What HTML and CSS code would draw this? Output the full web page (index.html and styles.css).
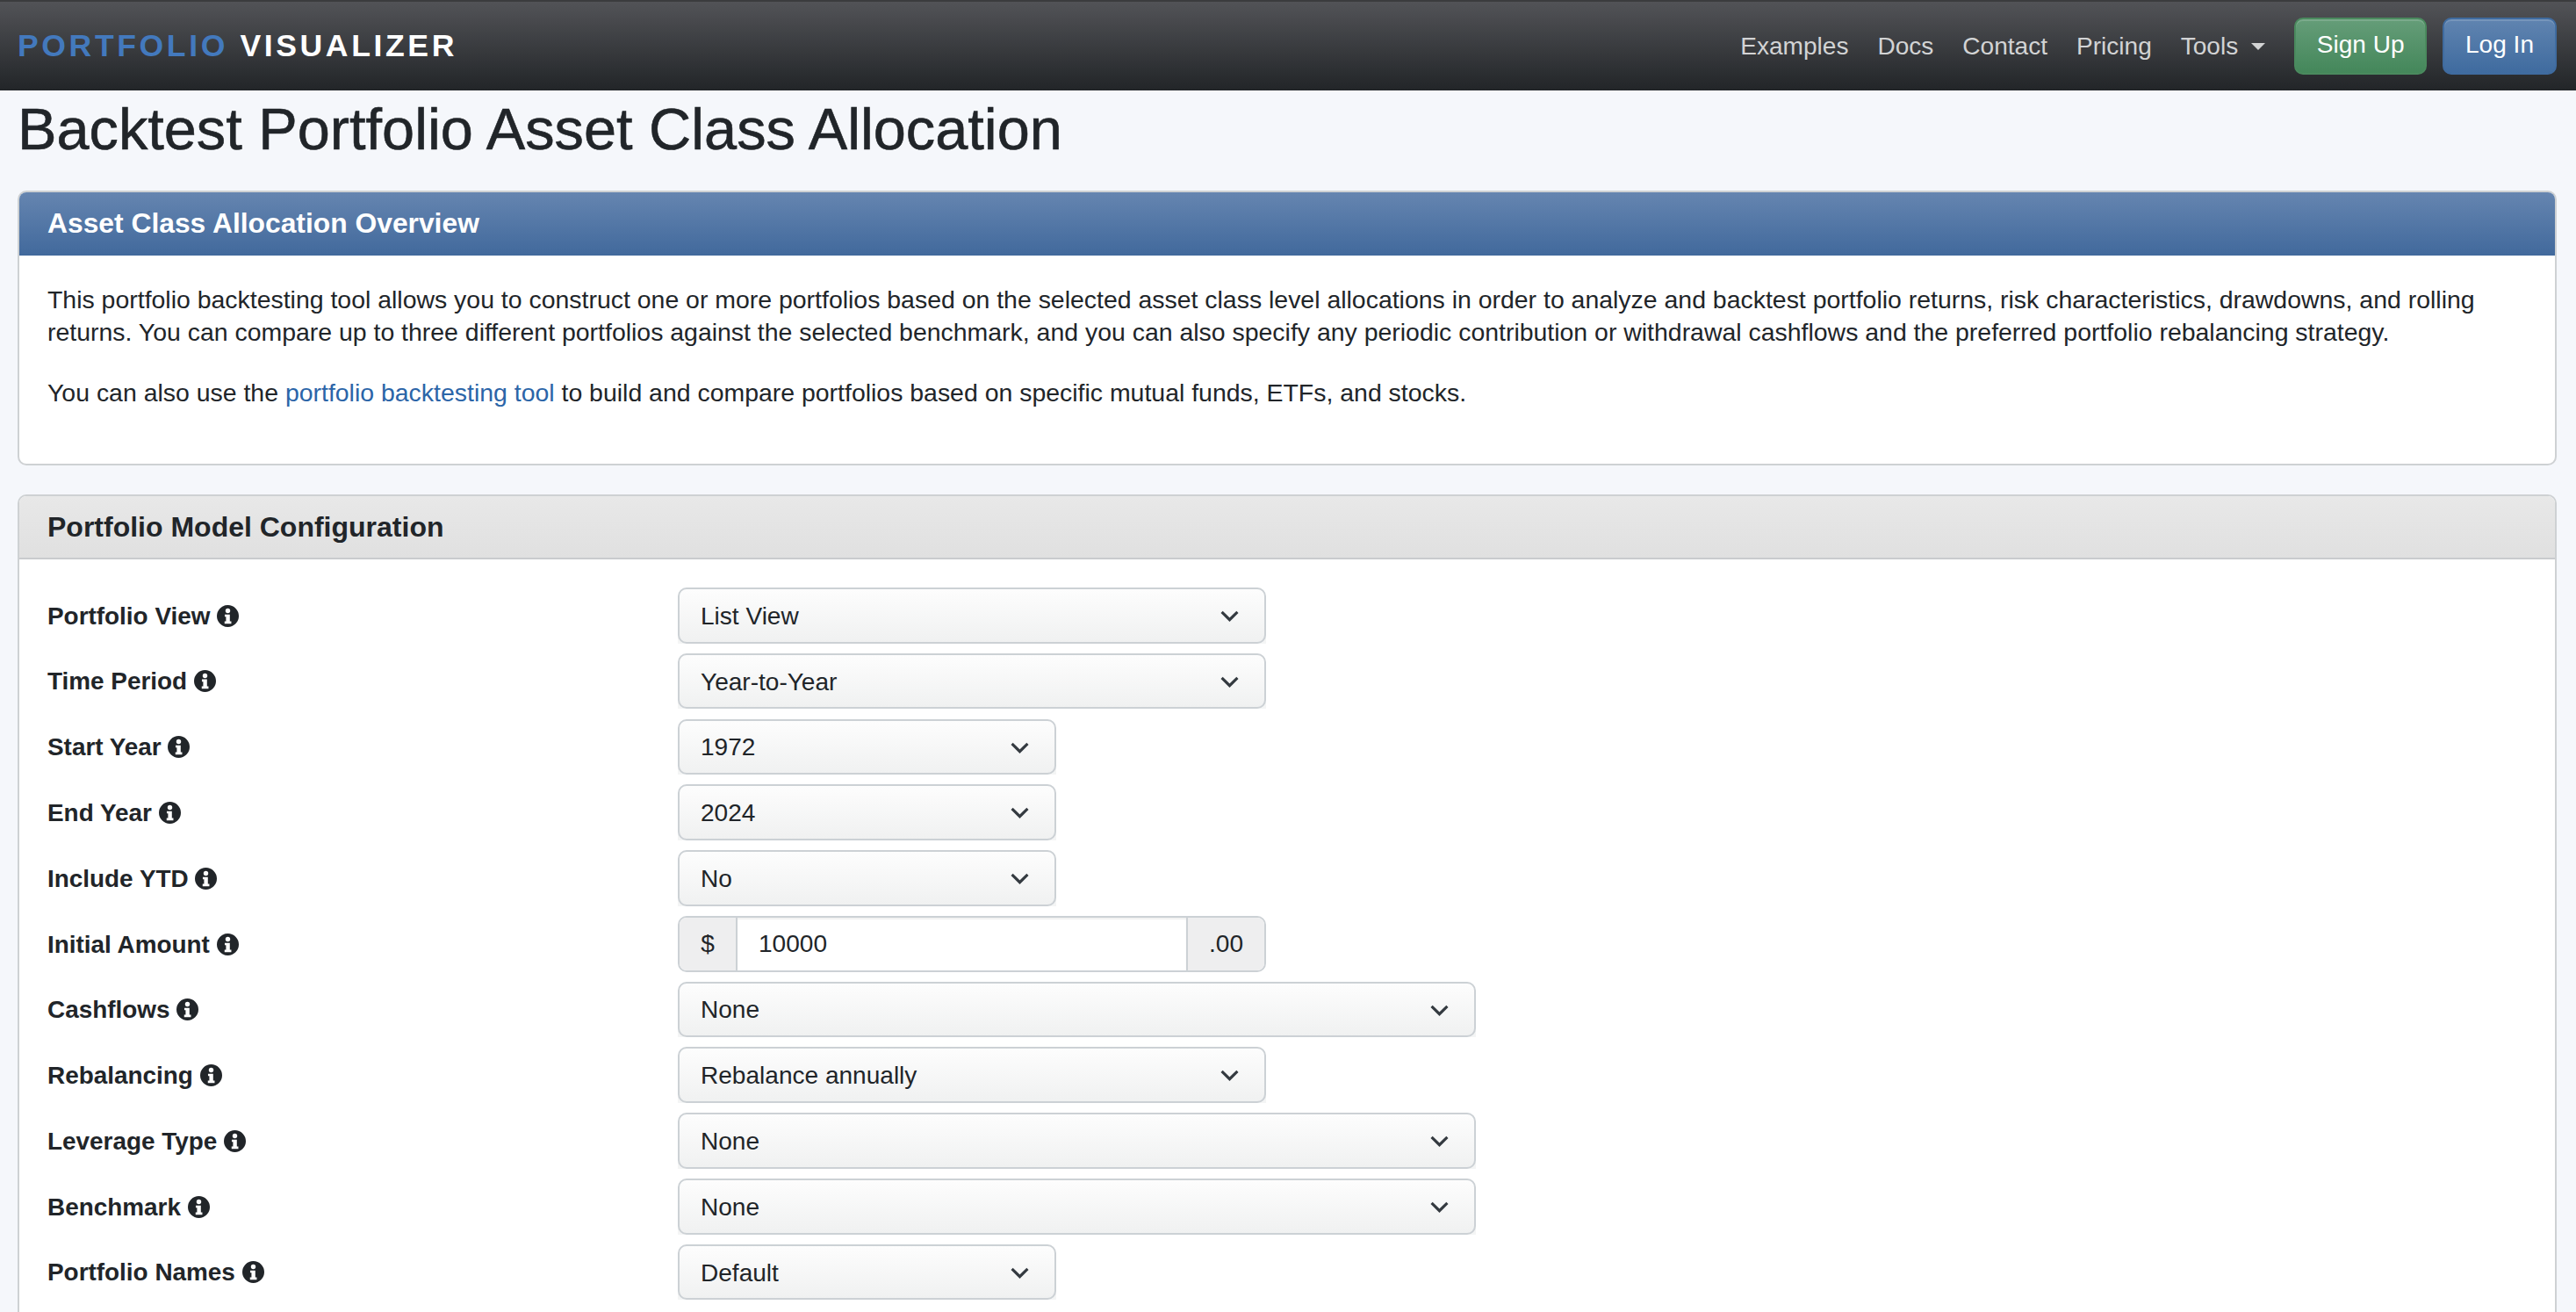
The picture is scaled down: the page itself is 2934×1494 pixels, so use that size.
FILE: index.html
```html
<!DOCTYPE html>
<html>
<head>
<meta charset="UTF-8">
<title>Backtest Portfolio Asset Class Allocation</title>
<link rel="stylesheet" href="styles.css">
</head>
<body>
	<svg class="defs">
		<symbol id="info" viewBox="0 0 24 24">
			<path fill-rule="evenodd" d="M12 0a12 12 0 1 0 0 24a12 12 0 0 0 0-24zM12 3.6a2.6 2.6 0 1 1 0 5.2a2.6 2.6 0 0 1 0-5.2zM8.6 10.2h5.6v7.6h1.6v2.6H8.4v-2.6h1.6v-5H8.6z"/>
		</symbol>
		<symbol id="chevron" viewBox="0 0 20 12">
			<path d="M1.5 1.5L10 10L18.5 1.5" fill="none" stroke="#343a40" stroke-width="3"/>
		</symbol>
	</svg>

	<nav class="navbar">
		<a class="brand" href="#"><span class="brand_blue">PORTFOLIO</span> VISUALIZER</a>
		<div class="nav_links">
			<a href="#">Examples</a>
			<a href="#">Docs</a>
			<a href="#">Contact</a>
			<a href="#">Pricing</a>
			<a href="#" class="dropdown">Tools</a>
			<a href="#" class="btn btn_green">Sign Up</a>
			<a href="#" class="btn btn_blue">Log In</a>
		</div>
	</nav>

	<div class="content">
		<h1>Backtest Portfolio Asset Class Allocation</h1>

		<div class="panel">
			<div class="panel_head head_blue">Asset Class Allocation Overview</div>
			<div class="panel_body overview">
				<p>This portfolio backtesting tool allows you to construct one or more portfolios based on the selected asset class level allocations in order to analyze and backtest portfolio returns, risk characteristics, drawdowns, and rolling returns. You can compare up to three different portfolios against the selected benchmark, and you can also specify any periodic contribution or withdrawal cashflows and the preferred portfolio rebalancing strategy.</p>
				<p>You can also use the <a href="#">portfolio backtesting tool</a> to build and compare portfolios based on specific mutual funds, ETFs, and stocks.</p>
			</div>
		</div>

		<div class="panel">
			<div class="panel_head head_gray">Portfolio Model Configuration</div>
			<form class="panel_body config">
				<div class="row">
					<label>Portfolio View <svg class="info"><use href="#info"/></svg></label>
					<div class="select medium"><select><option>List View</option></select><svg class="chev"><use href="#chevron"/></svg></div>
				</div>
				<div class="row">
					<label>Time Period <svg class="info"><use href="#info"/></svg></label>
					<div class="select medium"><select><option>Year-to-Year</option></select><svg class="chev"><use href="#chevron"/></svg></div>
				</div>
				<div class="row">
					<label>Start Year <svg class="info"><use href="#info"/></svg></label>
					<div class="select narrow"><select><option>1972</option></select><svg class="chev"><use href="#chevron"/></svg></div>
				</div>
				<div class="row">
					<label>End Year <svg class="info"><use href="#info"/></svg></label>
					<div class="select narrow"><select><option>2024</option></select><svg class="chev"><use href="#chevron"/></svg></div>
				</div>
				<div class="row">
					<label>Include YTD <svg class="info"><use href="#info"/></svg></label>
					<div class="select narrow"><select><option>No</option></select><svg class="chev"><use href="#chevron"/></svg></div>
				</div>
				<div class="row">
					<label>Initial Amount <svg class="info"><use href="#info"/></svg></label>
					<div class="input_group medium">
						<span class="addon addon_left">$</span>
						<input type="text" value="10000">
						<span class="addon addon_right">.00</span>
					</div>
				</div>
				<div class="row">
					<label>Cashflows <svg class="info"><use href="#info"/></svg></label>
					<div class="select wide"><select><option>None</option></select><svg class="chev"><use href="#chevron"/></svg></div>
				</div>
				<div class="row">
					<label>Rebalancing <svg class="info"><use href="#info"/></svg></label>
					<div class="select medium"><select><option>Rebalance annually</option></select><svg class="chev"><use href="#chevron"/></svg></div>
				</div>
				<div class="row">
					<label>Leverage Type <svg class="info"><use href="#info"/></svg></label>
					<div class="select wide"><select><option>None</option></select><svg class="chev"><use href="#chevron"/></svg></div>
				</div>
				<div class="row">
					<label>Benchmark <svg class="info"><use href="#info"/></svg></label>
					<div class="select wide"><select><option>None</option></select><svg class="chev"><use href="#chevron"/></svg></div>
				</div>
				<div class="row">
					<label>Portfolio Names <svg class="info"><use href="#info"/></svg></label>
					<div class="select narrow"><select><option>Default</option></select><svg class="chev"><use href="#chevron"/></svg></div>
				</div>
			</form>
		</div>
	</div>
</body>
</html>
```

FILE: styles.css
```css
html,body{
	margin: 0px;
	height: 1494px;
	overflow: hidden;
}
body{
	background: #f5f7fb;
	color: #212529;
	font-family: "Liberation Sans", Arial, sans-serif;
	font-size: 28.05px;
	line-height: 37.4px;
}
a{
	text-decoration: none;
}
.defs{
	display: none;
}
.navbar{
	display: flex;
	align-items: center;
	justify-content: space-between;
	box-sizing: border-box;
	height: 103px;
	padding: 0px 22px 0px 20px;
	border-top: 2px solid #3b3c3e;
	background: linear-gradient(#525357, #222528);
}
.brand{
	color: #fff;
	font-size: 35.6px;
	font-weight: bold;
	letter-spacing: 3.6px;
}
.brand_blue{
	color: #4379bd;
}
.nav_links{
	display: flex;
	align-items: center;
}
.nav_links a{
	margin-left: 33px;
	color: #d2d3d4;
}
.dropdown::after{
	content: "";
	display: inline-block;
	margin-left: 15px;
	vertical-align: 5px;
	border-top: 8px solid #d2d3d4;
	border-left: 8px solid transparent;
	border-right: 8px solid transparent;
}
.nav_links .btn{
	box-sizing: border-box;
	height: 65px;
	padding: 0px 24px;
	border-radius: 10px;
	color: #fff;
	line-height: 57px;
}
.nav_links .btn_green{
	margin-left: 33px;
	padding: 0px 23.5px;
	border: 2px solid #4a8a5e;
	background: linear-gradient(#659d79, #44875a);
	box-shadow: inset 0px 2px 0px rgba(255,255,255,0.15);
}
.nav_links .btn_blue{
	margin-left: 18px;
	border: 2px solid #3f6b9f;
	background: linear-gradient(#6084b0, #3f6b9f);
	box-shadow: inset 0px 2px 0px rgba(255,255,255,0.15);
}
.content{
	padding: 0px 22px 0px 20px;
}
h1{
	margin: 0px 0px 31px 0px;
	padding-top: 5px;
	font-size: 66.7px;
	font-weight: normal;
	line-height: 78px;
	-webkit-text-stroke: 0.6px #212529;
}
.panel{
	margin-bottom: 33px;
	border: 2px solid #ced1d3;
	border-radius: 10px;
	background: #fff;
}
.panel_head{
	box-sizing: border-box;
	height: 72px;
	padding: 0px 32px;
	font-size: 32px;
	font-weight: bold;
	line-height: 70px;
	border-radius: 8px 8px 0px 0px;
}
.head_blue{
	color: #fff;
	font-size: 31.8px;
	background: linear-gradient(#6585b0, #41699c);
}
.head_gray{
	border-bottom: 2px solid #c9cbcd;
	background: linear-gradient(#e8e8e8, #e0e0e0);
}
.panel_body{
	padding: 32px;
}
.overview{
	height: 237px;
	box-sizing: border-box;
	font-size: 28.45px;
}
.overview p{
	margin: 0px 0px 32px 0px;
}
.overview p:last-child{
	margin-top: -1px;
}
.overview a{
	color: #2b65a8;
}
.row{
	display: flex;
	align-items: center;
	margin-bottom: 11.2px;
}
.row label{
	width: 718px;
	padding-top: 1px;
	font-size: 27.9px;
	font-weight: bold;
}
.info{
	width: 25px;
	height: 25px;
	vertical-align: -3px;
	fill: #212529;
}
.narrow{
	width: 431px;
}
.medium{
	width: 670px;
}
.wide{
	width: 909px;
}
.select{
	position: relative;
	height: 63.6px;
	background: linear-gradient(transparent 50%, #f4f5f5 50%);
}
.select select{
	appearance: none;
	box-sizing: border-box;
	width: 100%;
	height: 100%;
	padding: 1px 24px 0px 24px;
	border: 2px solid #ccd1d5;
	border-radius: 10px;
	background: linear-gradient(#fdfdfd, #f0f1f1);
	color: #212529;
	font-family: inherit;
	font-size: inherit;
}
.chev{
	position: absolute;
	top: 26px;
	right: 31px;
	width: 21px;
	height: 13px;
	pointer-events: none;
}
.input_group{
	display: flex;
	box-sizing: border-box;
	height: 63.6px;
	border: 2px solid #ccd1d5;
	border-radius: 10px;
	overflow: hidden;
}
.addon{
	flex: none;
	box-sizing: border-box;
	background: #eeeeef;
	line-height: 60px;
	text-align: center;
}
.addon_left{
	width: 66px;
	border-right: 2px solid #ccd1d5;
}
.addon_right{
	width: 89px;
	border-left: 2px solid #ccd1d5;
}
.input_group input{
	flex: 1;
	min-width: 0;
	padding: 0px 24px;
	border: 0px;
	color: #212529;
	font-family: inherit;
	font-size: inherit;
	box-shadow: inset 0px 2px 2px rgba(0,0,0,0.06);
}
```
